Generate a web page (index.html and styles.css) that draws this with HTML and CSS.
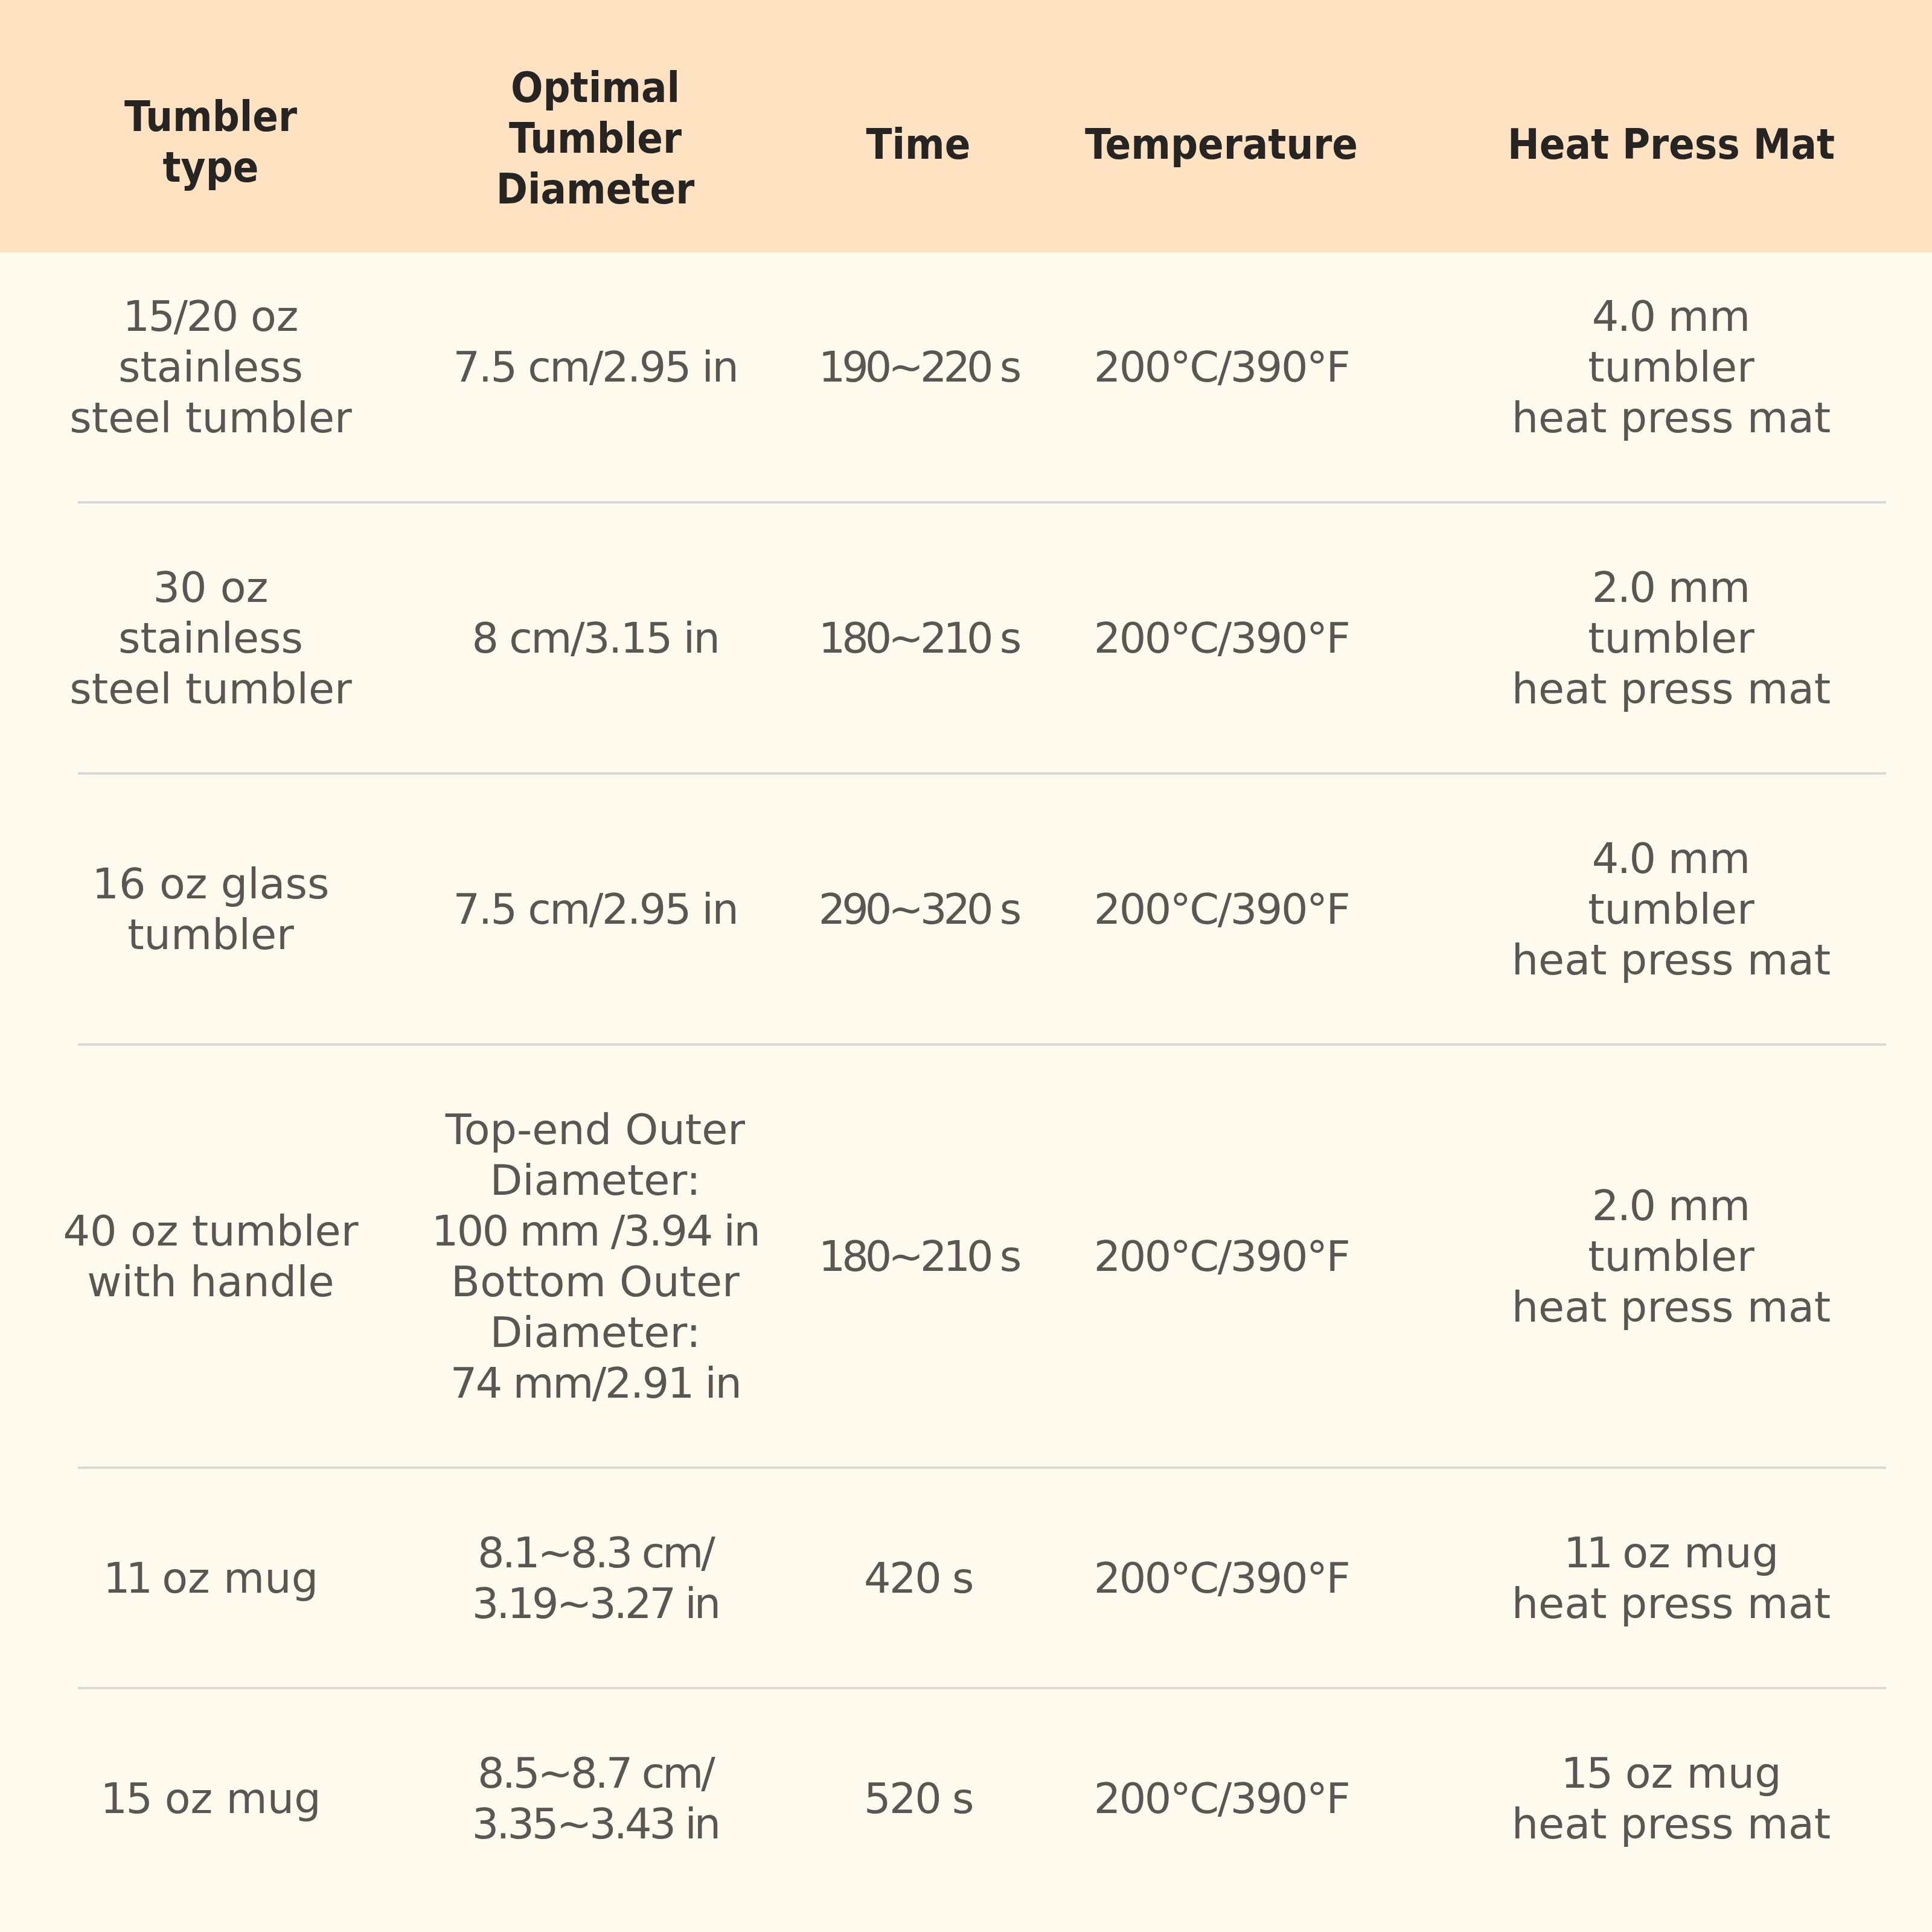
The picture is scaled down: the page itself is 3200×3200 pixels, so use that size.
FILE: index.html
```html
<!DOCTYPE html>
<html lang="en">
<head>
<meta charset="utf-8">
<title>Tumbler heat press settings</title>
<link rel="stylesheet" href="styles.css">
</head>
<body>
<div class="table">
  <div class="row head">
    <div class="cell two">Tumbler<br>type</div>
    <div class="cell">Optimal<br>Tumbler<br>Diameter</div>
    <div class="cell one">Time</div>
    <div class="cell c4 one">Temperature</div>
    <div class="cell one">Heat Press Mat</div>
  </div>

  <div class="row first">
    <div class="cell"><span class="n">15/20</span> oz<br>stainless<br>steel tumbler</div>
    <div class="cell n">7.5 cm/2.95 in</div>
    <div class="cell t">190~220 s</div>
    <div class="cell c4 n">200°C/390°F</div>
    <div class="cell"><span class="n">4.0</span> mm<br>tumbler<br>heat press mat</div>
  </div>
  <div class="divider"></div>

  <div class="row">
    <div class="cell">30 oz<br>stainless<br>steel tumbler</div>
    <div class="cell n">8 cm/3.15 in</div>
    <div class="cell t">180~210 s</div>
    <div class="cell c4 n">200°C/390°F</div>
    <div class="cell"><span class="n">2.0</span> mm<br>tumbler<br>heat press mat</div>
  </div>
  <div class="divider"></div>

  <div class="row">
    <div class="cell">16 oz glass<br>tumbler</div>
    <div class="cell n">7.5 cm/2.95 in</div>
    <div class="cell t">290~320 s</div>
    <div class="cell c4 n">200°C/390°F</div>
    <div class="cell"><span class="n">4.0</span> mm<br>tumbler<br>heat press mat</div>
  </div>
  <div class="divider"></div>

  <div class="row">
    <div class="cell">40 oz tumbler<br>with handle</div>
    <div class="cell">Top-end Outer<br>Diameter:<br><span class="n">100 mm /3.94 in</span><br>Bottom Outer<br>Diameter:<br><span class="n">74 mm/2.91 in</span></div>
    <div class="cell t">180~210 s</div>
    <div class="cell c4 n">200°C/390°F</div>
    <div class="cell"><span class="n">2.0</span> mm<br>tumbler<br>heat press mat</div>
  </div>
  <div class="divider"></div>

  <div class="row">
    <div class="cell"><span class="one1">11</span> oz mug</div>
    <div class="cell t2">8.1~8.3 cm/<br>3.19~3.27 in</div>
    <div class="cell n">420 s</div>
    <div class="cell c4 n">200°C/390°F</div>
    <div class="cell"><span class="one1">11</span> oz mug<br>heat press mat</div>
  </div>
  <div class="divider"></div>

  <div class="row">
    <div class="cell"><span class="n">15</span> oz mug</div>
    <div class="cell t2">8.5~8.7 cm/<br>3.35~3.43 in</div>
    <div class="cell n">520 s</div>
    <div class="cell c4 n">200°C/390°F</div>
    <div class="cell"><span class="n">15</span> oz mug<br>heat press mat</div>
  </div>
</div>
</body>
</html>
```

FILE: styles.css
```css
html, body {
  margin: 0;
  padding: 0;
  background: #fefaee;
}

.table {
  width: 3200px;
  min-height: 3200px;
  background: #fefaee;
  font-family: "DejaVu Sans", "Liberation Sans", sans-serif;
  font-size: 70px;
  line-height: 84px;
  color: #595653;
}

.row {
  display: grid;
  grid-template-columns: 698px 576px 494px 568px 864px;
  align-items: center;
  padding: 97px 0 96px;
}

.row.first {
  padding-top: 64px;
}

.cell {
  text-align: center;
  white-space: nowrap;
}

.cell.c4 {
  padding-right: 58px;
}

.n {
  letter-spacing: -2.5px;
}

.t {
  letter-spacing: -6px;
}

.t2 {
  letter-spacing: -4px;
}

.one1 {
  letter-spacing: -7px;
}

.head {
  height: 418px;
  box-sizing: border-box;
  padding: 40px 0 0;
  background: #ffe2c1;
  color: #262524;
  font-family: "DejaVu Sans Condensed", "DejaVu Sans", sans-serif;
  font-weight: 700;
}

.head .two {
  padding-top: 12px;
}

.head .one {
  padding-top: 20px;
}

.divider {
  height: 4px;
  margin: 0 76px 0 129px;
  background: #dbd9d5;
}
```
